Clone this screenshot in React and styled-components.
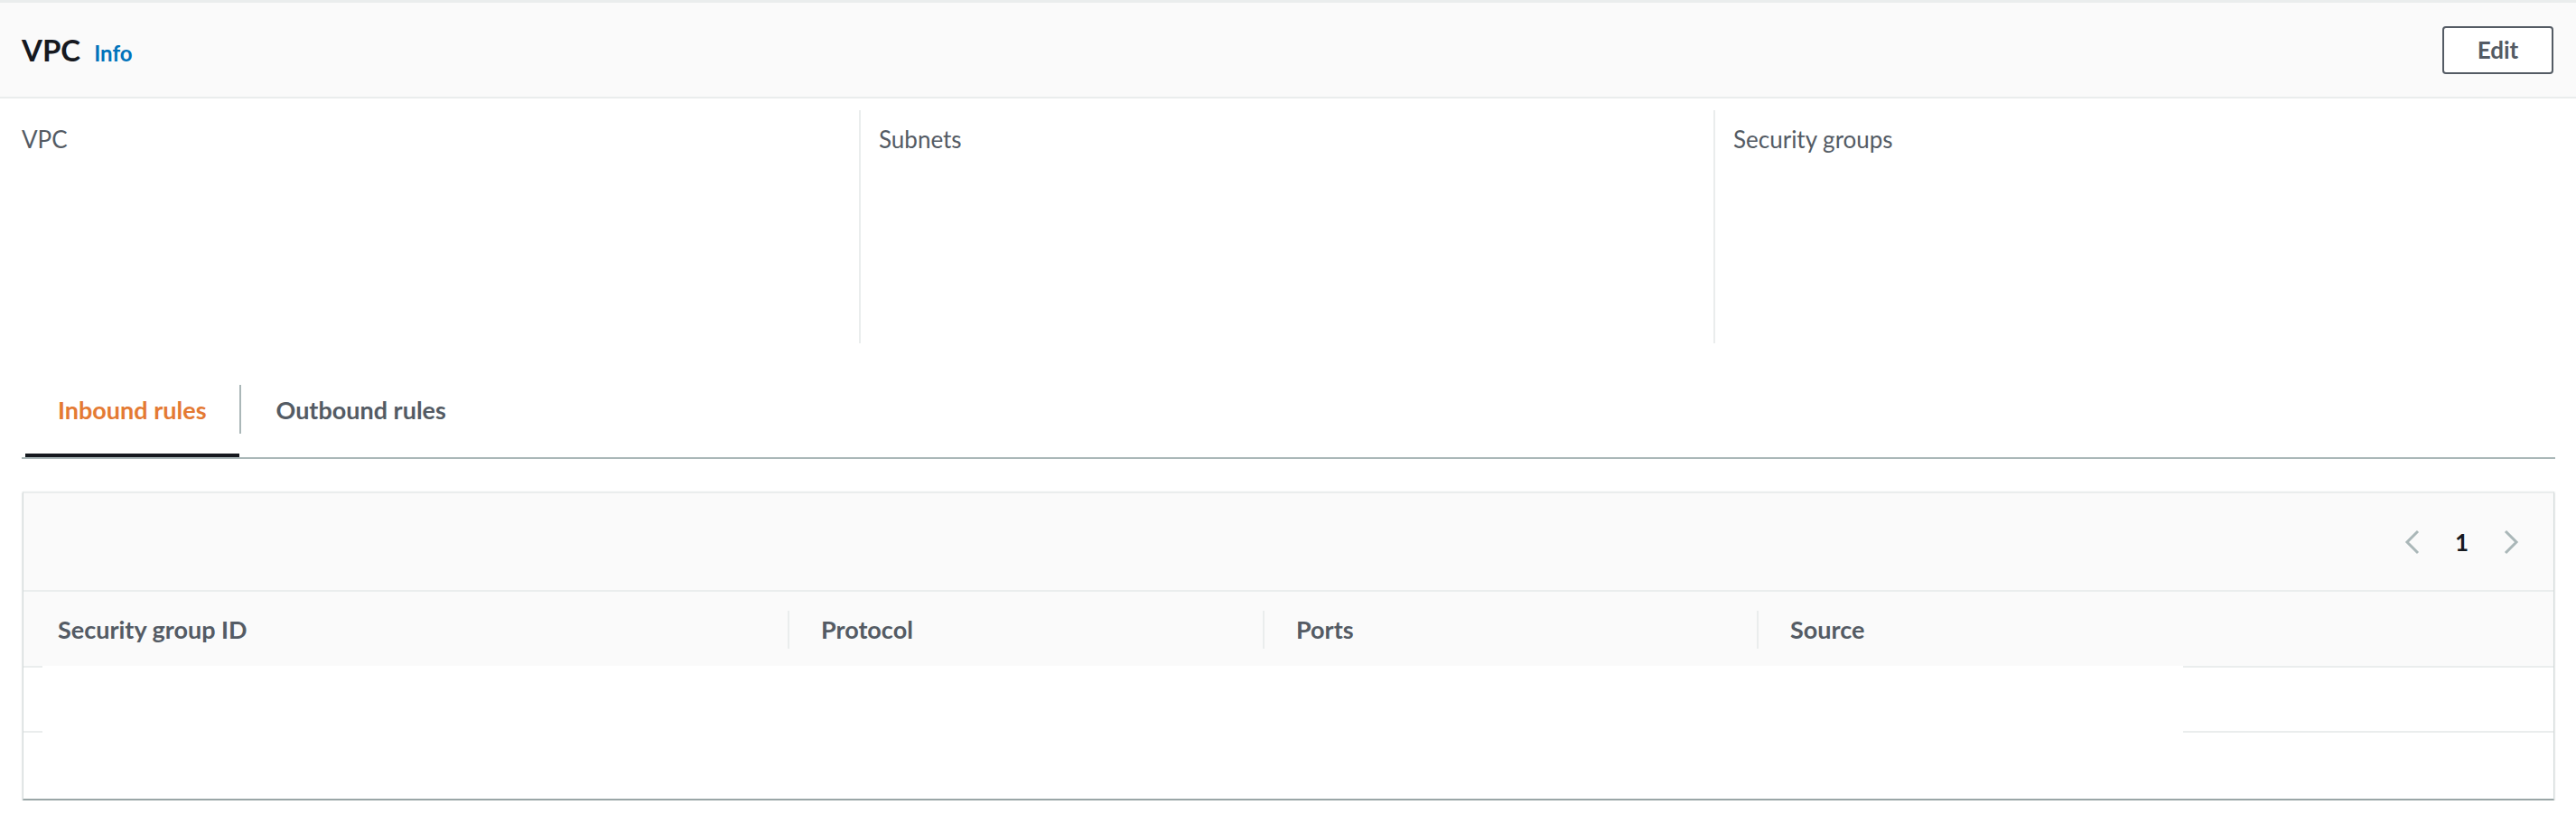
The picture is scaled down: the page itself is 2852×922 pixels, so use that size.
import styled, { createGlobalStyle } from "styled-components";

const GlobalStyle = createGlobalStyle`
  body {
    margin: 0;
    background: #ffffff;
    font-family: Lato, "Open Sans", Arial, sans-serif;
    color: #16191f;
  }
`;

const Page = styled.div`
  width: 2852px;
`;

const Panel = styled.section`
  border-top: 3px solid #eaeded;
`;

const PanelHeader = styled.header`
  height: 104px;
  background: #fafafa;
  border-bottom: 2px solid #eaeded;
  padding: 0 25px 0 24px;
  display: flex;
  align-items: center;
  justify-content: space-between;
`;

const Title = styled.h2`
  margin: 0;
  display: flex;
  align-items: baseline;
  gap: 15px;
  font-size: 33px;
  font-weight: 700;
  color: #16191f;
`;

const InfoLink = styled.a`
  font-size: 24px;
  font-weight: 700;
  color: #0073bb;
  text-decoration: none;
`;

const Button = styled.button`
  width: 123px;
  height: 53px;
  border: 2px solid #545b64;
  border-radius: 4px;
  background: #ffffff;
  color: #545b64;
  font-family: inherit;
  font-size: 26px;
  font-weight: 700;
  cursor: pointer;
`;

const Columns = styled.div`
  margin-top: 13px;
  padding: 0 24px;
  display: grid;
  grid-template-columns: 927px 946px 1fr;
  height: 258px;
`;

const Column = styled.div`
  padding-top: 16px;
  padding-left: ${(p) => (p.$first ? "0" : "20px")};
  border-left: ${(p) => (p.$first ? "none" : "2px solid #eaeded")};
`;

const Label = styled.div`
  font-size: 26px;
  color: #545b64;
`;

const Tabs = styled.nav`
  margin: 20px 23px 0 24px;
  display: flex;
  align-items: center;
  border-bottom: 2px solid #aab7b8;
`;

const Tab = styled.button`
  height: 106px;
  padding: 4px 36px 0 ${(p) => p.$pad}px;
  margin-left: ${(p) => p.$offset || 0}px;
  border: none;
  border-bottom: 4px solid ${(p) => (p.$active ? "#16191f" : "transparent")};
  background: none;
  font-family: inherit;
  font-size: 27px;
  font-weight: 700;
  color: ${(p) => (p.$active ? "#e47a33" : "#545b64")};
  cursor: pointer;
`;

const TabDivider = styled.span`
  width: 2px;
  height: 54px;
  background: #aab7b8;
`;

const Container = styled.section`
  margin: 36px 24px 0 25px;
  border-top: 2px solid #eaeded;
  border-left: 1px solid #d5dbdb;
  border-right: 1px solid #d5dbdb;
  border-bottom: 2px solid #9aa6a7;
  box-shadow: 0 1px 2px 0 rgba(0, 28, 36, 0.25);
  background: #ffffff;
`;

const ContainerHeader = styled.div`
  height: 107px;
  background: #fafafa;
  display: flex;
  align-items: center;
  justify-content: flex-end;
  padding-right: 38px;
`;

const Pagination = styled.div`
  display: flex;
  align-items: center;
  gap: 38px;
`;

const PageNumber = styled.span`
  font-size: 26px;
  font-weight: 700;
  color: #16191f;
`;

const Table = styled.div`
  position: relative;
  border-top: 2px solid #eaeded;
`;

const HeadRow = styled.div`
  display: grid;
  grid-template-columns: 846px 526px 547px 1fr;
  height: 82px;
  background: #fafafa;
`;

const HeadCell = styled.div`
  display: flex;
  align-items: center;
  padding-left: ${(p) => (p.$first ? "38px" : "37px")};
  font-size: 27px;
  font-weight: 700;
  color: #545b64;
  position: relative;
  &::before {
    content: "";
    display: ${(p) => (p.$first ? "none" : "block")};
    position: absolute;
    left: 0;
    top: 21px;
    width: 2px;
    height: 42px;
    background: #eaeded;
  }
`;

const Row = styled.div`
  height: ${(p) => p.$h}px;
  border-top: 2px solid #eaeded;
`;

const Cover = styled.div`
  position: absolute;
  top: 82px;
  left: 21px;
  width: 2370px;
  height: 78px;
  background: #ffffff;
`;

const Chevron = ({ dir }) => (
  <svg width="18" height="28" viewBox="0 0 18 28" fill="none">
    <path
      d={dir === "left" ? "M15 2 L3 14 L15 26" : "M3 2 L15 14 L3 26"}
      stroke="#aab7b8"
      strokeWidth="3"
    />
  </svg>
);

export default function App() {
  return (
    <Page>
      <GlobalStyle />
      <Panel>
        <PanelHeader>
          <Title>
            VPC <InfoLink href="#">Info</InfoLink>
          </Title>
          <Button type="button">Edit</Button>
        </PanelHeader>
        <Columns>
          <Column $first>
            <Label>VPC</Label>
          </Column>
          <Column>
            <Label>Subnets</Label>
          </Column>
          <Column>
            <Label>Security groups</Label>
          </Column>
        </Columns>
      </Panel>

      <Tabs>
        <Tab $active $offset={4} $pad={36}>
          Inbound rules
        </Tab>
        <TabDivider />
        <Tab $pad={39}>Outbound rules</Tab>
      </Tabs>

      <Container>
        <ContainerHeader>
          <Pagination>
            <Chevron dir="left" />
            <PageNumber>1</PageNumber>
            <Chevron dir="right" />
          </Pagination>
        </ContainerHeader>
        <Table>
          <HeadRow>
            <HeadCell $first>Security group ID</HeadCell>
            <HeadCell>Protocol</HeadCell>
            <HeadCell>Ports</HeadCell>
            <HeadCell>Source</HeadCell>
          </HeadRow>
          <Row $h={70} />
          <Row $h={73} />
          <Cover />
        </Table>
      </Container>
    </Page>
  );
}
